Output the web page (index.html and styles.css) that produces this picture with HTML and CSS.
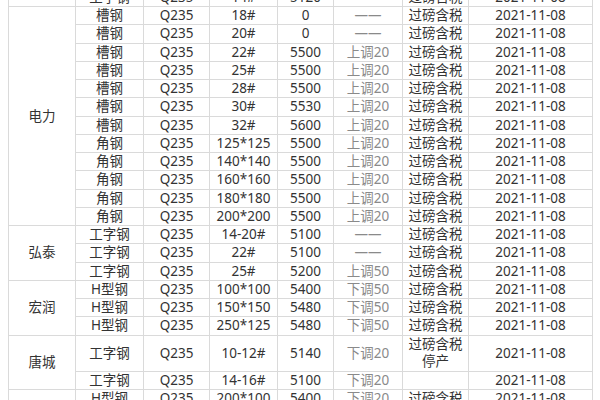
FILE: index.html
```html
<!DOCTYPE html>
<html>
<head>
<meta charset="utf-8">
<link rel="stylesheet" href="styles.css">
</head>
<body>
<table class="price">
  <colgroup>
    <col class="c1"><col class="c2"><col class="c3"><col class="c4"><col class="c5"><col class="c6"><col class="c7"><col class="c8">
  </colgroup>
  <tbody>
    <tr><td></td><td>工字钢</td><td>Q235</td><td>14#</td><td>5120</td><td class="adj">——</td><td>过磅含税</td><td>2021-11-08</td></tr>
    <tr><td rowspan="12">电力</td><td>槽钢</td><td>Q235</td><td>18#</td><td>0</td><td class="adj">——</td><td>过磅含税</td><td>2021-11-08</td></tr>
    <tr><td>槽钢</td><td>Q235</td><td>20#</td><td>0</td><td class="adj">——</td><td>过磅含税</td><td>2021-11-08</td></tr>
    <tr><td>槽钢</td><td>Q235</td><td>22#</td><td>5500</td><td class="adj">上调20</td><td>过磅含税</td><td>2021-11-08</td></tr>
    <tr><td>槽钢</td><td>Q235</td><td>25#</td><td>5500</td><td class="adj">上调20</td><td>过磅含税</td><td>2021-11-08</td></tr>
    <tr><td>槽钢</td><td>Q235</td><td>28#</td><td>5500</td><td class="adj">上调20</td><td>过磅含税</td><td>2021-11-08</td></tr>
    <tr><td>槽钢</td><td>Q235</td><td>30#</td><td>5530</td><td class="adj">上调20</td><td>过磅含税</td><td>2021-11-08</td></tr>
    <tr><td>槽钢</td><td>Q235</td><td>32#</td><td>5600</td><td class="adj">上调20</td><td>过磅含税</td><td>2021-11-08</td></tr>
    <tr><td>角钢</td><td>Q235</td><td>125*125</td><td>5500</td><td class="adj">上调20</td><td>过磅含税</td><td>2021-11-08</td></tr>
    <tr><td>角钢</td><td>Q235</td><td>140*140</td><td>5500</td><td class="adj">上调20</td><td>过磅含税</td><td>2021-11-08</td></tr>
    <tr><td>角钢</td><td>Q235</td><td>160*160</td><td>5500</td><td class="adj">上调20</td><td>过磅含税</td><td>2021-11-08</td></tr>
    <tr><td>角钢</td><td>Q235</td><td>180*180</td><td>5500</td><td class="adj">上调20</td><td>过磅含税</td><td>2021-11-08</td></tr>
    <tr><td>角钢</td><td>Q235</td><td>200*200</td><td>5500</td><td class="adj">上调20</td><td>过磅含税</td><td>2021-11-08</td></tr>
    <tr><td rowspan="3">弘泰</td><td>工字钢</td><td>Q235</td><td>14-20#</td><td>5100</td><td class="adj">——</td><td>过磅含税</td><td>2021-11-08</td></tr>
    <tr><td>工字钢</td><td>Q235</td><td>22#</td><td>5100</td><td class="adj">——</td><td>过磅含税</td><td>2021-11-08</td></tr>
    <tr><td>工字钢</td><td>Q235</td><td>25#</td><td>5200</td><td class="adj">上调50</td><td>过磅含税</td><td>2021-11-08</td></tr>
    <tr><td rowspan="3">宏润</td><td>H型钢</td><td>Q235</td><td>100*100</td><td>5400</td><td class="adj">下调50</td><td>过磅含税</td><td>2021-11-08</td></tr>
    <tr><td>H型钢</td><td>Q235</td><td>150*150</td><td>5480</td><td class="adj">下调50</td><td>过磅含税</td><td>2021-11-08</td></tr>
    <tr><td>H型钢</td><td>Q235</td><td>250*125</td><td>5480</td><td class="adj">下调50</td><td>过磅含税</td><td>2021-11-08</td></tr>
    <tr class="tall"><td rowspan="2">唐城</td><td>工字钢</td><td>Q235</td><td>10-12#</td><td>5140</td><td class="adj">下调20</td><td>过磅含税<br>停产</td><td>2021-11-08</td></tr>
    <tr><td>工字钢</td><td>Q235</td><td>14-16#</td><td>5100</td><td class="adj">下调20</td><td></td><td>2021-11-08</td></tr>
    <tr><td rowspan="2"></td><td>H型钢</td><td>Q235</td><td>200*100</td><td>5400</td><td class="adj">下调20</td><td>过磅含税</td><td>2021-11-08</td></tr>
    <tr><td>H型钢</td><td>Q235</td><td>200*100</td><td>5400</td><td class="adj">下调20</td><td>过磅含税</td><td>2021-11-08</td></tr>
  </tbody>
</table>
</body>
</html>
```

FILE: styles.css
```css
html, body {
  margin: 0;
  padding: 0;
  background: #ffffff;
  overflow: hidden;
}
body {
  padding: 0 8px;
  font-family: "Noto Sans", "Noto Sans CJK SC", sans-serif;
  font-size: 13.5px;
  color: #333333;
}
.price {
  border-collapse: collapse;
  table-layout: fixed;
  width: 584px;
  margin-top: -12.25px;
}
.c1 { width: 67px; }
.c2 { width: 68px; }
.c3 { width: 66px; }
.c4 { width: 68px; }
.c5 { width: 56px; }
.c6 { width: 69px; }
.c7 { width: 66px; }
.c8 { width: 124px; }
.price td {
  border: 1px solid #dadada;
  padding: 0;
  height: 17.25px;
  line-height: 17px;
  text-align: center;
  vertical-align: middle;
  white-space: nowrap;
  overflow: hidden;
}
.price tr.tall td {
  height: 35.5px;
}
.price td.adj {
  color: #8a8a8a;
}
```
